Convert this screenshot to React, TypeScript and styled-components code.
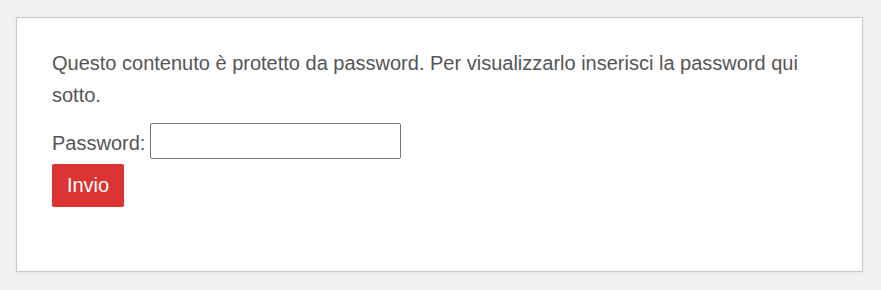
import React from "react";
import styled, { createGlobalStyle } from "styled-components";

const Global = createGlobalStyle`
  html, body { margin: 0; padding: 0; background: #f1f1f1; }
  body { font-family: "Liberation Sans", Arial, sans-serif; }
`;

const Page = styled.div`
  padding: 17px 18px 18px 16px;
`;

const Panel = styled.div`
  background: #fff;
  border: 1px solid #c8c8c8;
  box-shadow: 0 1px 4px rgba(0, 0, 0, 0.06);
  height: 255px;
  box-sizing: border-box;
  padding: 29px 35px 0 35px;
  color: #555;
  font-size: 20px;
  line-height: 32px;
`;

const Intro = styled.p`
  margin: 0 0 12px 0;
`;

const Row = styled.div`
  display: flex;
  align-items: center;
  gap: 5px;
`;

const Label = styled.label`
  font-size: 20px;
  line-height: 32px;
  padding-top: 4px;
`;

const Input = styled.input`
  width: 251px;
  height: 36px;
  box-sizing: border-box;
  border: 1px solid #767676;
  border-radius: 2px;
  background: #fff;
  padding: 0 6px;
  font: inherit;
`;

const Button = styled.button`
  display: block;
  margin-top: 5px;
  background: #dd3333;
  color: #fff;
  border: none;
  border-radius: 2px;
  width: 72px;
  height: 43px;
  font-family: "Liberation Sans", Arial, sans-serif;
  font-size: 20px;
  cursor: pointer;
`;

export default function App() {
  return (
    <>
      <Global />
      <Page>
        <Panel>
          <Intro>
            Questo contenuto è protetto da password. Per visualizzarlo inserisci la password qui sotto.
          </Intro>
          <Row>
            <Label htmlFor="pwd">Password:</Label>
            <Input id="pwd" type="password" />
          </Row>
          <Button type="submit">Invio</Button>
        </Panel>
      </Page>
    </>
  );
}
